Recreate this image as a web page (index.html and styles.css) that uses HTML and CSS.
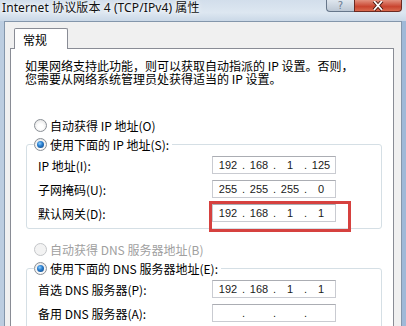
FILE: index.html
```html
<html>
<head>
    <link rel="stylesheet" href="styles.css">
</head>
<body>
    <div class="window">
        <div class="titlebar">
            <span class="title">Internet 协议版本 4 (TCP/IPv4) 属性</span>
            <div class="caption">
                <span class="btn-help">?</span>
                <span class="btn-close">
                    <svg width="14" height="10" viewBox="0 0 14 10">
                        <path d="M3 0 L11 9 M11 0 L3 9" stroke="#4a1a12" stroke-width="3.4" fill="none"/>
                        <path d="M3 0 L11 9 M11 0 L3 9" stroke="#ffffff" stroke-width="1.8" fill="none"/>
                    </svg>
                </span>
            </div>
        </div>
        <div class="client">
            <div class="tabs">
                <div class="tab">常规</div>
            </div>
            <div class="panel">
                <p class="intro">如果网络支持此功能，则可以获取自动指派的 IP 设置。否则，<br>您需要从网络系统管理员处获得适当的 IP 设置。</p>

                <div class="radio-row first">
                    <span class="radio"></span>
                    <span>自动获得 IP 地址(O)</span>
                </div>
                <fieldset class="group">
                    <legend class="radio-row">
                        <span class="radio checked"></span>
                        <span>使用下面的 IP 地址(S):</span>
                    </legend>
                    <div class="rows">
                        <span class="label">IP 地址(I):</span>
                        <div class="ip">
                            <span class="num">192</span><span class="dot">.</span><span class="num">168</span><span class="dot">.</span><span class="num">1</span><span class="dot">.</span><span class="num">125</span>
                        </div>
                        <span class="label">子网掩码(U):</span>
                        <div class="ip">
                            <span class="num">255</span><span class="dot">.</span><span class="num">255</span><span class="dot">.</span><span class="num">255</span><span class="dot">.</span><span class="num">0</span>
                        </div>
                        <span class="label">默认网关(D):</span>
                        <div class="ip">
                            <span class="num">192</span><span class="dot">.</span><span class="num">168</span><span class="dot">.</span><span class="num">1</span><span class="dot">.</span><span class="num">1</span>
                            <span class="highlight"></span>
                        </div>
                    </div>
                </fieldset>

                <div class="radio-row second">
                    <span class="radio disabled"></span>
                    <span class="muted">自动获得 DNS 服务器地址(B)</span>
                </div>
                <fieldset class="group">
                    <legend class="radio-row">
                        <span class="radio checked"></span>
                        <span>使用下面的 DNS 服务器地址(E):</span>
                    </legend>
                    <div class="rows">
                        <span class="label">首选 DNS 服务器(P):</span>
                        <div class="ip">
                            <span class="num">192</span><span class="dot">.</span><span class="num">168</span><span class="dot">.</span><span class="num">1</span><span class="dot">.</span><span class="num">1</span>
                        </div>
                        <span class="label">备用 DNS 服务器(A):</span>
                        <div class="ip">
                            <span class="num"></span><span class="dot">.</span><span class="num"></span><span class="dot">.</span><span class="num"></span><span class="dot">.</span><span class="num"></span>
                        </div>
                    </div>
                </fieldset>
            </div>
        </div>
    </div>
</body>
</html>
```

FILE: styles.css
```css
        body {
            margin: 0;
            width: 406px;
            height: 326px;
            overflow: hidden;
            background: linear-gradient(90deg, #bccde0 0, #bccde0 4px, #d6e2ee 4px, #e2eaf3 50%, #cfdcea 398px, #9fb9d8 402px);
            font-family: "Noto Sans CJK SC", sans-serif;
            font-size: 12px;
            color: #000;
        }
        .window {
            display: flex;
            flex-direction: column;
            height: 326px;
        }
        .titlebar {
            height: 21px;
            display: flex;
            justify-content: space-between;
            align-items: flex-start;
            background: linear-gradient(180deg, #d2deeb, #dde7f1 60%, #cad8e7);
        }
        .title {
            padding: 0 0 0 2px;
            line-height: 16px;
            font-family: "Noto Sans", "Noto Sans CJK SC", sans-serif;
            font-size: 12px;
            letter-spacing: 0.1px;
            color: #111;
            text-shadow: 0 0 6px #fff, 0 0 3px #fff;
        }
        .caption {
            display: flex;
            margin-right: 4px;
        }
        .btn-help {
            width: 27px;
            height: 11px;
            border: 1px solid #66768a;
            border-top: none;
            border-right: none;
            border-radius: 0 0 0 4px;
            background: linear-gradient(180deg, #dfe6ee, #bcc7d4);
            color: #6a7c92;
            font-family: "DejaVu Sans", sans-serif;
            font-size: 10px;
            line-height: 11px;
            text-align: center;
        }
        .btn-close {
            width: 46px;
            height: 11px;
            border: 1px solid #6b2a22;
            border-top: none;
            border-radius: 0 0 4px 0;
            background: linear-gradient(180deg, #e2917f, #c9442f 60%, #d96a4e);
            display: flex;
            justify-content: center;
            align-items: center;
            overflow: hidden;
        }
        .client {
            flex: 1;
            margin: 0 4px;
            border: 1px solid #8496ab;
            border-bottom: none;
            background-color: #f0f0f0;
            padding: 6px 7px 0 5px;
            display: flex;
            flex-direction: column;
            min-height: 0;
        }
        .tabs {
            display: flex;
            position: relative;
            z-index: 1;
            margin-bottom: -1px;
        }
        .tab {
            margin-left: 4px;
            width: 44px;
            height: 20px;
            padding-left: 8px;
            line-height: 22px;
            border: 1px solid #898c95;
            border-bottom: none;
            border-radius: 2px 2px 0 0;
            background-color: #ffffff;
        }
        .panel {
            flex: 1;
            border: 1px solid #898c95;
            border-bottom: none;
            background-color: #ffffff;
            padding: 10px 11px 0 14px;
            overflow: hidden;
        }
        .intro {
            margin: 0;
            line-height: 13px;
            white-space: nowrap;
        }
        .radio-row {
            display: flex;
            align-items: center;
            gap: 3px;
            height: 20px;
            white-space: nowrap;
        }
        .radio-row.first {
            margin: 30px 0 0 9px;
        }
        .radio-row.second {
            margin: 10px 0 0 9px;
        }
        .radio {
            width: 11px;
            height: 11px;
            border: 1px solid #8a8f96;
            border-radius: 50%;
            background: radial-gradient(circle at 50% 60%, #ffffff 30%, #dcdcdc 100%);
            position: relative;
        }
        .radio.checked::after {
            content: "";
            position: absolute;
            left: 2px;
            top: 2px;
            width: 7px;
            height: 7px;
            border-radius: 50%;
            background: radial-gradient(circle at 40% 35%, #8fd0ff 0, #2a7fd0 40%, #0c3f7a 100%);
        }
        .radio.disabled {
            border-color: #c4c6c9;
            background: #f3f3f3;
        }
        .muted {
            color: #a0a0a0;
        }
        .group {
            margin: 0 0 0 1px;
            padding: 0 0 3px 11px;
            border: 1px solid #d5dfe5;
            border-radius: 3px;
        }
        .group legend {
            margin-left: -4px;
            padding: 0 3px 0 0;
            height: 18px;
        }
        .rows {
            display: grid;
            grid-template-columns: 174px 124px;
            grid-auto-rows: 24px;
            align-items: center;
        }
        .label {
            white-space: nowrap;
        }
        .ip {
            position: relative;
            height: 16px;
            padding-left: 4px;
            border: 1px solid #c9cbd1;
            border-top-color: #abadb3;
            display: flex;
            align-items: center;
            font-family: "Liberation Sans", sans-serif;
            font-size: 11px;
            color: #1a1a1a;
        }
        .num {
            width: 22px;
            text-align: center;
        }
        .dot {
            width: 9px;
            text-align: center;
        }
        .highlight {
            position: absolute;
            left: -4px;
            top: -4px;
            width: 142px;
            height: 31px;
            border: 3px solid #d6413f;
            box-sizing: border-box;
        }
```
